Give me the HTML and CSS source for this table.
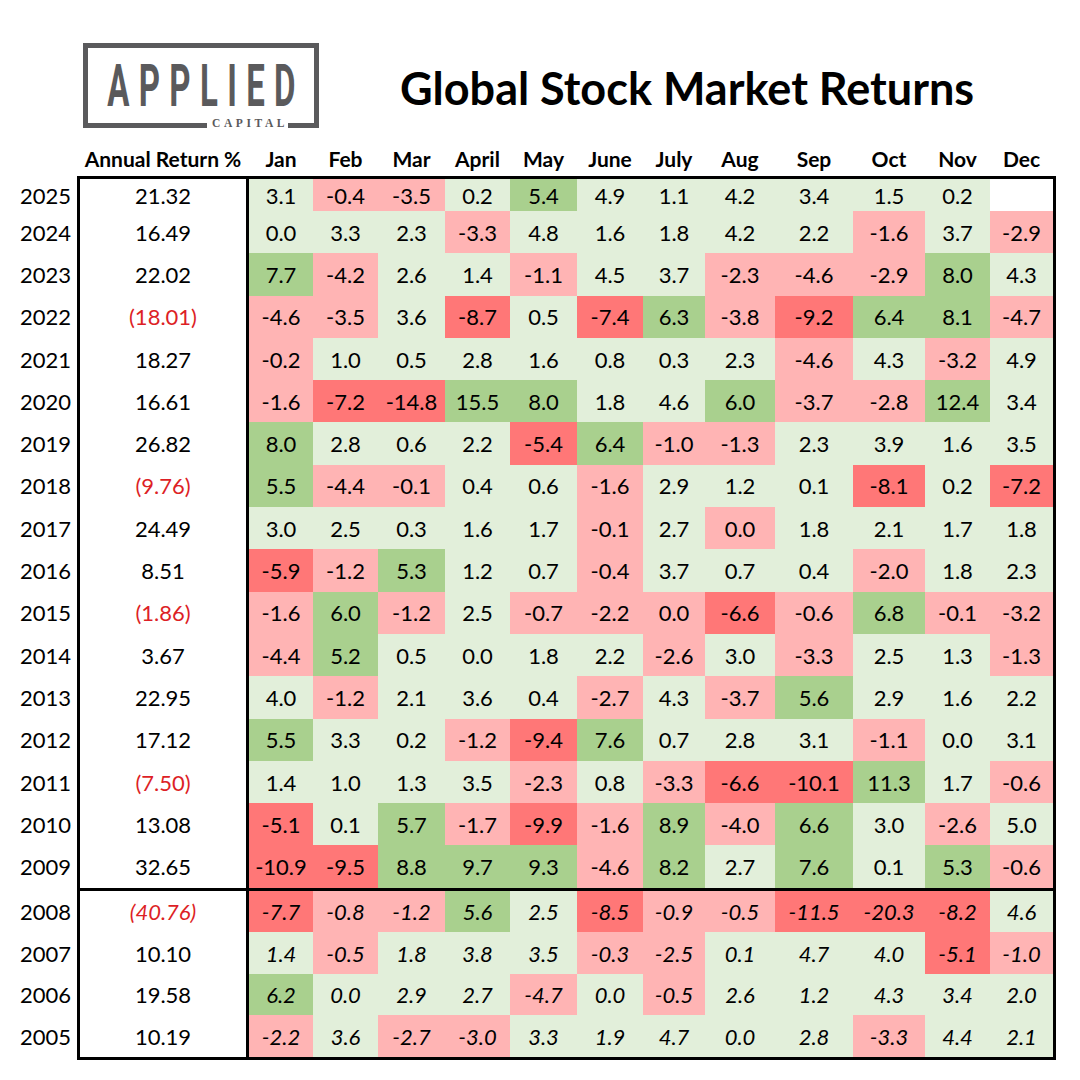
FILE: index.html
```html
<!DOCTYPE html>
<html lang="en">
<head>
<meta charset="utf-8">
<title>Global Stock Market Returns</title>
<link rel="stylesheet" href="styles.css">
</head>
<body>
<div class="page">
  <div class="top">
    <svg class="logo" viewBox="0 0 236 86" width="236" height="86" aria-label="Applied Capital">
      <path d="M124 82.5 H2.5 V2.5 H233.5 V82.5 H205" fill="none" stroke="#5a5a5c" stroke-width="5"/>
      <text class="logo-main" x="44" y="63" transform="scale(0.55 1)">APPLIED</text>
      <text class="logo-sub" x="129" y="84">CAPITAL</text>
    </svg>
    <h1 class="title">Global Stock Market Returns</h1>
  </div>

  <div class="colhead">
    <div></div>
    <div>Annual Return %</div>
    <div>Jan</div><div>Feb</div><div>Mar</div><div>April</div><div>May</div><div>June</div>
    <div>July</div><div>Aug</div><div>Sep</div><div>Oct</div><div>Nov</div><div>Dec</div>
  </div>

  <div class="block upper">
    <div class="years">
      <div class="y first">2025</div><div class="y">2024</div><div class="y">2023</div><div class="y">2022</div>
      <div class="y">2021</div><div class="y">2020</div><div class="y">2019</div><div class="y">2018</div>
      <div class="y">2017</div><div class="y">2016</div><div class="y">2015</div><div class="y">2014</div>
      <div class="y">2013</div><div class="y">2012</div><div class="y">2011</div><div class="y">2010</div>
      <div class="y">2009</div>
    </div>
    <div class="frame">
      <div class="row first"><div class="ann">21.32</div><div class="c g">3.1</div><div class="c r">-0.4</div><div class="c r">-3.5</div><div class="c g">0.2</div><div class="c G">5.4</div><div class="c g">4.9</div><div class="c g">1.1</div><div class="c g">4.2</div><div class="c g">3.4</div><div class="c g">1.5</div><div class="c g">0.2</div><div class="c e"></div></div>
      <div class="row"><div class="ann">16.49</div><div class="c g">0.0</div><div class="c g">3.3</div><div class="c g">2.3</div><div class="c r">-3.3</div><div class="c g">4.8</div><div class="c g">1.6</div><div class="c g">1.8</div><div class="c g">4.2</div><div class="c g">2.2</div><div class="c r">-1.6</div><div class="c g">3.7</div><div class="c r">-2.9</div></div>
      <div class="row"><div class="ann">22.02</div><div class="c G">7.7</div><div class="c r">-4.2</div><div class="c g">2.6</div><div class="c g">1.4</div><div class="c r">-1.1</div><div class="c g">4.5</div><div class="c g">3.7</div><div class="c r">-2.3</div><div class="c r">-4.6</div><div class="c r">-2.9</div><div class="c G">8.0</div><div class="c g">4.3</div></div>
      <div class="row"><div class="ann neg">(18.01)</div><div class="c r">-4.6</div><div class="c r">-3.5</div><div class="c g">3.6</div><div class="c R">-8.7</div><div class="c g">0.5</div><div class="c R">-7.4</div><div class="c G">6.3</div><div class="c r">-3.8</div><div class="c R">-9.2</div><div class="c G">6.4</div><div class="c G">8.1</div><div class="c r">-4.7</div></div>
      <div class="row"><div class="ann">18.27</div><div class="c r">-0.2</div><div class="c g">1.0</div><div class="c g">0.5</div><div class="c g">2.8</div><div class="c g">1.6</div><div class="c g">0.8</div><div class="c g">0.3</div><div class="c g">2.3</div><div class="c r">-4.6</div><div class="c g">4.3</div><div class="c r">-3.2</div><div class="c g">4.9</div></div>
      <div class="row"><div class="ann">16.61</div><div class="c r">-1.6</div><div class="c R">-7.2</div><div class="c R">-14.8</div><div class="c G">15.5</div><div class="c G">8.0</div><div class="c g">1.8</div><div class="c g">4.6</div><div class="c G">6.0</div><div class="c r">-3.7</div><div class="c r">-2.8</div><div class="c G">12.4</div><div class="c g">3.4</div></div>
      <div class="row"><div class="ann">26.82</div><div class="c G">8.0</div><div class="c g">2.8</div><div class="c g">0.6</div><div class="c g">2.2</div><div class="c R">-5.4</div><div class="c G">6.4</div><div class="c r">-1.0</div><div class="c r">-1.3</div><div class="c g">2.3</div><div class="c g">3.9</div><div class="c g">1.6</div><div class="c g">3.5</div></div>
      <div class="row"><div class="ann neg">(9.76)</div><div class="c G">5.5</div><div class="c r">-4.4</div><div class="c r">-0.1</div><div class="c g">0.4</div><div class="c g">0.6</div><div class="c r">-1.6</div><div class="c g">2.9</div><div class="c g">1.2</div><div class="c g">0.1</div><div class="c R">-8.1</div><div class="c g">0.2</div><div class="c R">-7.2</div></div>
      <div class="row"><div class="ann">24.49</div><div class="c g">3.0</div><div class="c g">2.5</div><div class="c g">0.3</div><div class="c g">1.6</div><div class="c g">1.7</div><div class="c r">-0.1</div><div class="c g">2.7</div><div class="c r">0.0</div><div class="c g">1.8</div><div class="c g">2.1</div><div class="c g">1.7</div><div class="c g">1.8</div></div>
      <div class="row"><div class="ann">8.51</div><div class="c R">-5.9</div><div class="c r">-1.2</div><div class="c G">5.3</div><div class="c g">1.2</div><div class="c g">0.7</div><div class="c r">-0.4</div><div class="c g">3.7</div><div class="c g">0.7</div><div class="c g">0.4</div><div class="c r">-2.0</div><div class="c g">1.8</div><div class="c g">2.3</div></div>
      <div class="row"><div class="ann neg">(1.86)</div><div class="c r">-1.6</div><div class="c G">6.0</div><div class="c r">-1.2</div><div class="c g">2.5</div><div class="c r">-0.7</div><div class="c r">-2.2</div><div class="c r">0.0</div><div class="c R">-6.6</div><div class="c r">-0.6</div><div class="c G">6.8</div><div class="c r">-0.1</div><div class="c r">-3.2</div></div>
      <div class="row"><div class="ann">3.67</div><div class="c r">-4.4</div><div class="c G">5.2</div><div class="c g">0.5</div><div class="c g">0.0</div><div class="c g">1.8</div><div class="c g">2.2</div><div class="c r">-2.6</div><div class="c g">3.0</div><div class="c r">-3.3</div><div class="c g">2.5</div><div class="c g">1.3</div><div class="c r">-1.3</div></div>
      <div class="row"><div class="ann">22.95</div><div class="c g">4.0</div><div class="c r">-1.2</div><div class="c g">2.1</div><div class="c g">3.6</div><div class="c g">0.4</div><div class="c r">-2.7</div><div class="c g">4.3</div><div class="c r">-3.7</div><div class="c G">5.6</div><div class="c g">2.9</div><div class="c g">1.6</div><div class="c g">2.2</div></div>
      <div class="row"><div class="ann">17.12</div><div class="c G">5.5</div><div class="c g">3.3</div><div class="c g">0.2</div><div class="c r">-1.2</div><div class="c R">-9.4</div><div class="c G">7.6</div><div class="c g">0.7</div><div class="c g">2.8</div><div class="c g">3.1</div><div class="c r">-1.1</div><div class="c g">0.0</div><div class="c g">3.1</div></div>
      <div class="row"><div class="ann neg">(7.50)</div><div class="c g">1.4</div><div class="c g">1.0</div><div class="c g">1.3</div><div class="c g">3.5</div><div class="c r">-2.3</div><div class="c g">0.8</div><div class="c r">-3.3</div><div class="c R">-6.6</div><div class="c R">-10.1</div><div class="c G">11.3</div><div class="c g">1.7</div><div class="c r">-0.6</div></div>
      <div class="row"><div class="ann">13.08</div><div class="c R">-5.1</div><div class="c g">0.1</div><div class="c G">5.7</div><div class="c r">-1.7</div><div class="c R">-9.9</div><div class="c r">-1.6</div><div class="c G">8.9</div><div class="c r">-4.0</div><div class="c G">6.6</div><div class="c g">3.0</div><div class="c r">-2.6</div><div class="c g">5.0</div></div>
      <div class="row"><div class="ann">32.65</div><div class="c R">-10.9</div><div class="c R">-9.5</div><div class="c G">8.8</div><div class="c G">9.7</div><div class="c G">9.3</div><div class="c r">-4.6</div><div class="c G">8.2</div><div class="c g">2.7</div><div class="c G">7.6</div><div class="c g">0.1</div><div class="c G">5.3</div><div class="c r">-0.6</div></div>
    </div>
  </div>

  <div class="block lower">
    <div class="years">
      <div class="y">2008</div><div class="y">2007</div><div class="y">2006</div><div class="y">2005</div>
    </div>
    <div class="frame">
      <div class="row"><div class="ann neg">(40.76)</div><div class="c R">-7.7</div><div class="c r">-0.8</div><div class="c r">-1.2</div><div class="c G">5.6</div><div class="c g">2.5</div><div class="c R">-8.5</div><div class="c r">-0.9</div><div class="c r">-0.5</div><div class="c R">-11.5</div><div class="c R">-20.3</div><div class="c R">-8.2</div><div class="c g">4.6</div></div>
      <div class="row"><div class="ann">10.10</div><div class="c g">1.4</div><div class="c r">-0.5</div><div class="c g">1.8</div><div class="c g">3.8</div><div class="c g">3.5</div><div class="c r">-0.3</div><div class="c r">-2.5</div><div class="c g">0.1</div><div class="c g">4.7</div><div class="c g">4.0</div><div class="c R">-5.1</div><div class="c r">-1.0</div></div>
      <div class="row"><div class="ann">19.58</div><div class="c G">6.2</div><div class="c g">0.0</div><div class="c g">2.9</div><div class="c g">2.7</div><div class="c r">-4.7</div><div class="c g">0.0</div><div class="c r">-0.5</div><div class="c g">2.6</div><div class="c g">1.2</div><div class="c g">4.3</div><div class="c g">3.4</div><div class="c g">2.0</div></div>
      <div class="row"><div class="ann">10.19</div><div class="c r">-2.2</div><div class="c g">3.6</div><div class="c r">-2.7</div><div class="c r">-3.0</div><div class="c g">3.3</div><div class="c g">1.9</div><div class="c g">4.7</div><div class="c g">0.0</div><div class="c g">2.8</div><div class="c r">-3.3</div><div class="c g">4.4</div><div class="c g">2.1</div></div>
    </div>
  </div>
</div>
</body>
</html>
```

FILE: styles.css
```css
* { box-sizing: border-box; }

body {
  margin: 0;
  background: #ffffff;
  color: #000;
  font-family: Lato, "Open Sans", "Liberation Sans", sans-serif;
}

.page {
  width: 1080px;
  height: 1080px;
  overflow: hidden;
}

/* ---------- top: logo + title ---------- */
.top {
  display: flex;
  align-items: flex-start;
  height: 140px;
  padding: 43px 0 0 83px;
}

.logo {
  display: block;
  flex: none;
}

.logo-main {
  font-family: Roboto, "DejaVu Sans", sans-serif;
  font-weight: 700;
  font-size: 60px;
  letter-spacing: 17px;
  fill: #5a5a5c;
}

.logo-sub {
  font-family: "Liberation Serif", serif;
  font-weight: 700;
  font-size: 11.5px;
  letter-spacing: 3.6px;
  fill: #5a5a5c;
}

.title {
  margin: 23px 0 0 81px;
  font-size: 45px;
  font-weight: 700;
  line-height: 1;
  color: #000;
  white-space: nowrap;
}

/* ---------- column header ---------- */
.colhead {
  display: grid;
  grid-template-columns: 77px 172px 64px 65px 67px 65px 67px 66px 62px 70px 78px 72px 65px 63px;
  height: 36px;
  align-items: center;
  padding-top: 1px;
  font-size: 21px;
  font-weight: 700;
  color: #000;
  text-align: center;
  white-space: nowrap;
}

/* ---------- table blocks ---------- */
.block {
  display: flex;
  font-size: 22px;
}

.years {
  width: 77px;
  flex: none;
  display: flex;
  flex-direction: column;
}

.upper .years { padding: 3px 0; }
.lower .years { padding: 0 0 3px; }

.y {
  height: 42.3px;
  display: flex;
  align-items: center;
  justify-content: flex-end;
  padding-right: 6px;
}

.frame {
  border: 3px solid #000;
  width: 979px;
}

.lower .frame { border-top: none; }

.row {
  display: grid;
  grid-template-columns: 169px 64px 65px 67px 65px 67px 66px 62px 70px 78px 72px 65px 63px;
  height: 42.3px;
}

.y.first,
.row.first { height: 32px; }

.lower .y,
.lower .row { height: 41.5px; }

.ann {
  border-right: 3px solid #000;
  display: flex;
  align-items: center;
  justify-content: center;
  background: #fff;
}

.ann.neg { color: #dd1f26; }

.lower .ann.neg,
.lower .c { font-style: italic; }

.c {
  display: flex;
  align-items: center;
  justify-content: center;
}

.g { background: #e2efda; }
.G { background: #a9d08e; }
.r { background: #ffb4b4; }
.R { background: #ff7777; }
.e { background: #ffffff; }
```
